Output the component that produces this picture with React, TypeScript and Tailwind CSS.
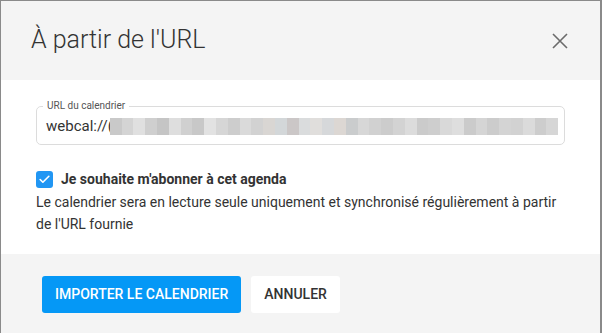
import { Check } from "lucide-react"

const blur = [
  "#c9c9c9", "#d4d4d4", "#e0e0e0", "#cfcfcf", "#c5c5c5", "#dedede", "#d0d0d0",
  "#c8c8c8", "#e2e2e2", "#d6d6d6", "#cdcdcd", "#dadada", "#d2d2d2", "#d9d6d3",
  "#d3d7d9", "#cbc7c7", "#dadcdd", "#e0dedc", "#d6d8da", "#dcd7d3", "#cacccd",
  "#d7d7d7", "#d1d1d1", "#cccccc", "#d3d3d3", "#dcdcdc", "#cbcbcb", "#cecece",
  "#d9d9d9", "#dedede", "#cbcbcb", "#d5d5d5", "#cccccc", "#d4d4d4", "#d2d2d2",
  "#dbdbdb", "#cdcdcd", "#d6d6d6",
]

export default function App() {
  return (
    <div className="h-[333px] w-[602px] overflow-hidden bg-[#8a8a8a] pl-px pt-px font-['Roboto',sans-serif]">
      <div className="w-[599px] bg-white">
        <div className="flex h-[79px] items-center justify-between bg-[#f4f4f4] pl-[30px] pr-[31px]">
          <h2 className="mt-[-2px] text-[25px] font-light text-[#333]">À partir de l'URL</h2>
          <svg width="18" height="18" viewBox="0 0 18 18" className="text-[#6b6b6b]">
            <path d="M2 2 L16 16 M16 2 L2 16" stroke="currentColor" strokeWidth="1.6" fill="none" />
          </svg>
        </div>
        <div className="px-[35px] pb-[19px] pt-[21px]">
          <fieldset className="relative h-[44px] rounded-[5px] border border-[#dcdcdc]">
            <legend className="ml-[6px] px-[4px] text-[10px] leading-[10px] text-[#555]">URL du calendrier</legend>
            <div className="flex items-center pl-[9px] pt-[4px]">
              <span className="text-[15px] text-[#333]">webcal://</span>
              <span className="text-[15px] text-[#333]">(</span>
              <div className="ml-[-3px] flex h-[17px]">
                {blur.map((c, i) => (
                  <div key={i} className="h-full w-[11.8px]" style={{ background: c }} />
                ))}
              </div>
            </div>
          </fieldset>
          <div className="mt-[24px] flex items-center gap-[8px]">
            <div className="flex h-[17px] w-[17px] items-center justify-center rounded-[3px] bg-[#2196f3]">
              <Check className="h-[13px] w-[13px] text-white" strokeWidth={3} />
            </div>
            <span className="text-[14px] font-bold text-[#333]">Je souhaite m'abonner à cet agenda</span>
          </div>
          <p className="mt-px text-[14px] leading-[22px] text-[#333]">
            Le calendrier sera en lecture seule uniquement et synchronisé régulièrement à partir de l'URL fournie
          </p>
        </div>
        <div className="flex h-[90px] gap-[10px] bg-[#f4f4f4] pl-[41px] pt-[22px]">
          <button className="h-[37px] rounded-[3px] bg-[#0598f6] px-[13px] text-[14px] font-medium text-white">
            IMPORTER LE CALENDRIER
          </button>
          <button className="h-[37px] rounded-[3px] bg-white px-[13px] text-[14px] font-medium text-[#333]">
            ANNULER
          </button>
        </div>
      </div>
    </div>
  )
}
